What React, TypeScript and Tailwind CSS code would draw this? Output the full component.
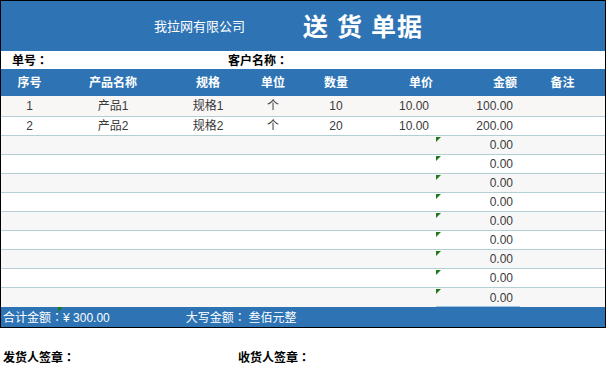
const font = "font-['Liberation_Sans','Noto_Sans_CJK_SC',sans-serif]"
const cjk = "font-['Noto_Sans_CJK_SC',sans-serif]"

const cols = [
  { w: 'w-[57px]', hd: 'justify-center', td: 'justify-center' },
  { w: 'w-[110px]', hd: 'justify-center', td: 'justify-center' },
  { w: 'w-[80px]', hd: 'justify-center', td: 'justify-center' },
  { w: 'w-[50px]', hd: 'justify-center', td: 'justify-center' },
  { w: 'w-[76px]', hd: 'justify-center', td: 'justify-center' },
  { w: 'w-[62px]', hd: 'justify-end pr-[3px]', td: 'justify-end pr-[7px]' },
  { w: 'w-[84px]', hd: 'justify-end pr-[3px]', td: 'justify-end pr-[7px]' },
  { w: 'w-[85px]', hd: 'justify-center', td: 'justify-center' },
]

const headers = ['序号', '产品名称', '规格', '单位', '数量', '单价', '金额', '备注']

const rows: string[][] = [
  ['1', '产品1', '规格1', '个', '10', '10.00', '100.00', ''],
  ['2', '产品2', '规格2', '个', '20', '10.00', '200.00', ''],
  ...Array.from({ length: 9 }, () => ['', '', '', '', '', '', '0.00', '']),
]

function Flag() {
  return (
    <svg width="5" height="5" className="absolute left-0 top-[1px]">
      <polygon points="0,0 5,0 0,5" fill="#1f7a1f" />
    </svg>
  )
}

// centred full-width colon, as in the source sheet
function Colon() {
  return <span className="font-['Noto_Sans_CJK_TC',sans-serif]">：</span>
}

export default function App() {
  return (
    <div className={`w-[609px] h-[375px] bg-white ${font}`}>
      <div className="w-[606px] border-x border-t border-black">
        <div className="h-[50px] bg-[#2e74b5] flex items-center text-white">
          <span className="ml-[153px] text-[13px] mt-[1px]">我拉网有限公司</span>
          <span className="ml-[58px] text-[25px] font-bold tracking-[1px] mt-[3px]">送 货 单据</span>
        </div>
        <div className={`h-[18px] flex items-center text-[12px] font-bold text-black ${cjk}`}>
          <span className="ml-[11px]">
            单号<Colon />
          </span>
          <span className="ml-[180px]">
            客户名称<Colon />
          </span>
        </div>
        <div className="h-[27px] bg-[#2e74b5] flex text-white text-[12px] font-bold">
          {headers.map((h, i) => (
            <div key={i} className={`${cols[i].w} flex items-center ${cols[i].hd}`}>
              {h}
            </div>
          ))}
        </div>
        {rows.map((r, ri) => (
          <div
            key={ri}
            className={`flex text-[12px] text-[#3a3a3a] ${ri === 0 ? 'h-[21px] bg-[#f9f6f6]' : 'h-[19px]'} ${
              ri % 2 === 0 && ri > 0 ? 'bg-[#f7f7f7]' : ''
            } ${ri < 10 ? 'border-b border-[#b3cfd3]' : ''}`}
          >
            {r.map((c, ci) => (
              <div key={ci} className={`${cols[ci].w} relative flex items-center ${cols[ci].td}`}>
                {ci === 6 && ri >= 2 && <Flag />}
                {ci === 6 && ri === 10 && <div className="absolute left-0 right-0 bottom-0 h-px bg-[#9dc3e6]" />}
                {c}
              </div>
            ))}
          </div>
        ))}
        <div className="h-[21px] bg-[#2e74b5] border-b border-black flex items-center text-white text-[12px] relative">
          <div className="absolute left-[57px] top-0">
            <svg width="5" height="5">
              <polygon points="0,0 5,0 0,5" fill="#1f7a1f" />
            </svg>
          </div>
          <span className="ml-[2px]">
            <span className={cjk}>合计金额</span>
            <Colon />¥ 300.00
          </span>
          <span className={`ml-[76px] ${cjk}`}>
            大写金额<Colon />
            &nbsp;叁佰元整
          </span>
        </div>
      </div>
      <div className={`flex text-[12px] font-bold text-black mt-[20px] ${cjk}`}>
        <span className="ml-[3px]">
          发货人签章<Colon />
        </span>
        <span className="ml-[163px]">
          收货人签章<Colon />
        </span>
      </div>
    </div>
  )
}
